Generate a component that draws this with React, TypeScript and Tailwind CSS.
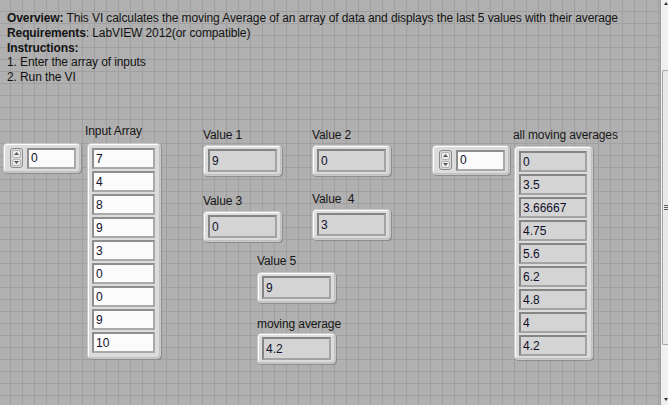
import type { ReactNode } from 'react';

const inputs = ['7', '4', '8', '9', '3', '0', '0', '9', '10'];
const averages = ['0', '3.5', '3.66667', '4.75', '5.6', '6.2', '4.8', '4', '4.2'];

function Label({ children, className = '' }: { children: ReactNode; className?: string }) {
  return (
    <div className={`h-[14px] leading-[14px] text-[12px] tracking-[-0.1px] text-[#161616] whitespace-pre ${className}`}>
      {children}
    </div>
  );
}

function Cell({ value, control }: { value: string; control?: boolean }) {
  return (
    <div
      className={`h-[21px] border-2 flex items-center pl-[2px] text-[12px] text-[#10102a] ${
        control
          ? 'bg-[#fbfbfb] border-[#8e8e8e] border-b-[#a9a9a9] border-r-[#a9a9a9]'
          : 'bg-[#d4d4d4] border-[#858585] border-b-[#a3a3a3] border-r-[#a3a3a3]'
      }`}
    >
      {value}
    </div>
  );
}

function Frame({ children, className = '' }: { children: ReactNode; className?: string }) {
  return (
    <div
      className={`rounded-[4px] bg-[#dcdcdc] border border-[#c9c9c9] shadow-[inset_1px_1px_0_#ffffff,inset_-1px_-1px_0_#c0c0c0,1px_1px_0_#8d8d8d] ${className}`}
    >
      {children}
    </div>
  );
}

function Incrementer() {
  return (
    <div className="w-[13px] h-[20px] flex flex-col gap-[1px] border border-[#8c8c8c] rounded-[3px] bg-[#dadada] p-[1px]">
      <div className="flex-1 flex items-center justify-center rounded-[2px] bg-[#ececec] border border-[#b4b4b4]">
        <svg width="5" height="4" viewBox="0 0 5 4">
          <path d="M0 3 L2.5 0 L5 3Z" fill="#5a5a5a" />
        </svg>
      </div>
      <div className="flex-1 flex items-center justify-center rounded-[2px] bg-[#ececec] border border-[#b4b4b4]">
        <svg width="5" height="4" viewBox="0 0 5 4">
          <path d="M0 1 L2.5 4 L5 1Z" fill="#5a5a5a" />
        </svg>
      </div>
    </div>
  );
}

function IndexControl({ className = '' }: { className?: string }) {
  return (
    <Frame className={`w-[78px] h-[30px] flex items-center pl-[6px] gap-[4px] ${className}`}>
      <Incrementer />
      <div className="w-[49px]">
        <Cell value="0" control />
      </div>
    </Frame>
  );
}

function Indicator({ label, value, className = '', gap = 'mt-[3px]' }: { label: string; value: string; className?: string; gap?: string }) {
  return (
    <div className={`flex flex-col ${className}`}>
      <Label>{label}</Label>
      <Frame className={`w-[79px] h-[31px] pl-[4px] pt-[3px] ${gap}`}>
        <div className="w-[69px] h-[23px] border-2 border-[#858585] border-b-[#a3a3a3] border-r-[#a3a3a3] bg-[#d4d4d4] flex items-center pl-[2px] text-[12px] text-[#10102a]">
          {value}
        </div>
      </Frame>
    </div>
  );
}

function Scrollbar() {
  return (
    <div className="w-[8px] h-full flex flex-col bg-[#f0f0f0] border-l border-[#9a9a9a]">
      <div className="h-[70px] flex justify-end pt-[2px]">
        <svg width="4" height="3" viewBox="0 0 4 3">
          <path d="M0 3 L2 0 L4 3Z" fill="#333" />
        </svg>
      </div>
      <div className="h-[275px] ml-[1px] bg-[#e9e9e9] border-l border-y border-[#a8a8a8] rounded-l-[2px] flex flex-col justify-center gap-[1px] pl-[1px]">
        <div className="w-[5px] h-[1px] bg-[#5c5c5c]" />
        <div className="w-[5px] h-[1px] bg-[#5c5c5c]" />
        <div className="w-[5px] h-[1px] bg-[#5c5c5c]" />
      </div>
      <div className="flex-1 flex items-end justify-end pb-[4px]">
        <svg width="4" height="3" viewBox="0 0 4 3">
          <path d="M0 0 L2 3 L4 0Z" fill="#333" />
        </svg>
      </div>
    </div>
  );
}

export default function App() {
  return (
    <div className="w-[668px] h-[405px] overflow-hidden flex font-['Liberation_Sans',Arial,sans-serif]">
      <div className="flex-1 h-full bg-[#b0b0b0] [background-image:linear-gradient(to_right,#a0a0a0_1px,transparent_1px),linear-gradient(to_bottom,#a0a0a0_1px,transparent_1px)] [background-size:12px_12px] [background-position:10px_11px]">
        <div className="h-[120px] pl-[7px] pt-[11px] text-[12px] leading-[14.75px] tracking-[-0.1px] text-[#141414]">
          <p>
            <b>Overview:</b> This VI calculates the moving Average of an array of data and displays the last 5 values with their average
          </p>
          <p>
            <b>Requirements</b>: LabVIEW 2012(or compatible)
          </p>
          <p>
            <b>Instructions:</b>
          </p>
          <p>1. Enter the array of inputs</p>
          <p>2. Run the VI</p>
        </div>

        <div className="flex items-start">
          <IndexControl className="ml-[3px] mt-[23px]" />

          <div className="ml-[4px] mt-[4px] flex flex-col">
            <Label>Input Array</Label>
            <Frame className="mt-[5px] ml-[2px] w-[74px] pl-[4px] pr-[5px] pt-[4px] pb-[5px] flex flex-col gap-[2px]">
              {inputs.map((v, i) => (
                <Cell key={i} value={v} control />
              ))}
            </Frame>
          </div>

          <div className="ml-[42px] mt-[8px] flex flex-col">
            <div className="flex">
              <Indicator label="Value 1" value="9" />
              <Indicator label="Value 2" value="0" className="ml-[30px]" />
            </div>
            <div className="flex items-start">
              <Indicator label="Value 3" value="0" className="mt-[18px]" />
              <Indicator label="Value  4" value="3" className="ml-[30px] mt-[16px]" />
            </div>
            <Indicator label="Value 5" value="9" className="ml-[54px] mt-[12px]" gap="mt-[4px]" />
            <Indicator label="moving average" value="4.2" className="ml-[54px] mt-[14px]" gap="mt-[2px]" />
          </div>

          <IndexControl className="ml-[41px] mt-[25px]" />

          <div className="ml-[3px] mt-[8px] flex flex-col">
            <Label>all moving averages</Label>
            <Frame className="mt-[4px] ml-[1px] w-[79px] pl-[4px] pr-[5px] pt-[4px] pb-[3px] flex flex-col gap-[2px]">
              {averages.map((v, i) => (
                <Cell key={i} value={v} />
              ))}
            </Frame>
          </div>
        </div>
      </div>
      <Scrollbar />
    </div>
  );
}
